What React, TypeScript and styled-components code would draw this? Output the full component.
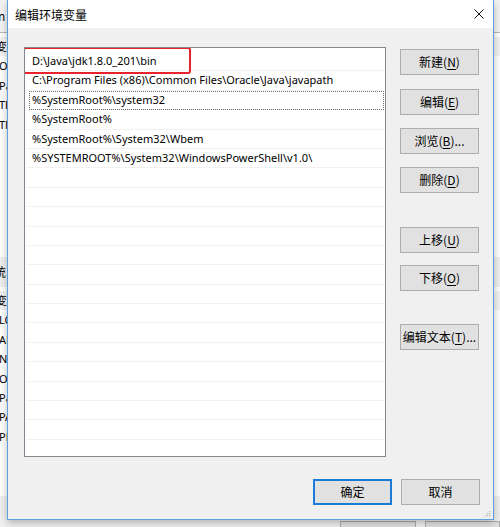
import React from "react";
import styled, { createGlobalStyle } from "styled-components";

const GlobalStyle = createGlobalStyle`
  html, body { margin: 0; padding: 0; }
  body {
    width: 500px;
    height: 527px;
    overflow: hidden;
    background: #ececec;
    font-family: "Noto Sans", "Noto Sans CJK SC", sans-serif;
    font-size: 12px;
    color: #000;
  }
`;

const FONT = `"Noto Sans", "Noto Sans CJK SC", sans-serif`;

const Desktop = styled.div`
  position: relative;
  width: 500px;
  height: 527px;
  overflow: hidden;
`;

/* ---------- background window (mostly hidden behind dialog) ---------- */
const BackWindow = styled.div`
  width: 500px;
  height: 527px;
  display: flex;
  flex-direction: column;
  background: #f0f0f0;
`;

const BackTitle = styled.div`
  height: 32px;
  border-bottom: 1px solid #b9b9b9;
  background: #f4f4f4;
  display: flex;
  align-items: center;
  font-family: ${FONT};
  font-size: 12px;
  margin-left: -6px;
`;

const BackList = styled.div<{ $h: number }>`
  height: ${(p) => p.$h}px;
  background: #fff;
  display: flex;
  flex-direction: column;
  padding-top: 4px;
`;

const BackRow = styled.div<{ $header?: boolean }>`
  height: 19.4px;
  line-height: 19px;
  font-family: ${FONT};
  font-size: 11px;
  white-space: nowrap;
  background: ${(p) => (p.$header ? "#f3f3f3" : "transparent")};
  margin-left: ${(p) => (p.$header ? "-4px" : "-1px")};
`;

const BackSection = styled.div`
  height: 30px;
  display: flex;
  align-items: center;
  font-family: ${FONT};
  font-size: 12px;
  margin-left: -6px;
`;

const BackButtons = styled.div`
  margin-top: auto;
  height: 6px;
  display: flex;
  padding-left: 340px;
  gap: 9px;
`;

const BackButton = styled.div<{ $w: number }>`
  width: ${(p) => p.$w}px;
  height: 26px;
  border: 1px solid #adadad;
  background: #e1e1e1;
  box-sizing: border-box;
`;

/* ---------- dialog ---------- */
const Dialog = styled.div`
  position: absolute;
  left: 7px;
  top: 0;
  width: 487px;
  height: 520px;
  box-sizing: border-box;
  border: 1px solid #5b9fe0;
  border-top: none;
  background: #f0f0f0;
  display: flex;
  flex-direction: column;
  box-shadow: 0 3px 8px rgba(0, 0, 0, 0.25);
`;

const TitleBar = styled.div`
  height: 28px;
  flex: none;
  background: #fff;
  display: flex;
  align-items: center;
  justify-content: space-between;
  padding: 0 9px 0 7px;
`;

const TitleText = styled.span`
  font-family: "Noto Sans CJK SC", sans-serif;
  font-size: 12px;
  color: #000;
`;

const CloseBox = styled.div`
  width: 10px;
  height: 10px;
  display: flex;
`;

const Body = styled.div`
  flex: 1;
  display: flex;
  flex-direction: column;
  padding: 19px 13px 15px 16px;
`;

const Main = styled.div`
  display: flex;
  align-items: flex-start;
`;

const ListBox = styled.div`
  position: relative;
  width: 362px;
  height: 410px;
  box-sizing: border-box;
  border: 1px solid #828790;
  background: #fff;
  overflow: hidden;
  padding: 4px 0 0 0;
  display: flex;
  flex-direction: column;
`;

const Row = styled.div<{ $focus?: boolean }>`
  height: 19.4px;
  flex: none;
  box-sizing: border-box;
  border-bottom: 1px solid #f2f2f2;
  margin-left: 1px;
  padding-left: 6px;
  line-height: 18px;
  font-family: ${FONT};
  font-size: 11px;
  color: #000;
  white-space: nowrap;
  outline: ${(p) => (p.$focus ? "1px dotted #6e6e6e" : "none")};
  outline-offset: -1px;
  ${(p) => (p.$focus ? "margin-left: 4px; padding-left: 3px; margin-right: 1px;" : "")}
`;

const Highlight = styled.div`
  position: absolute;
  left: -2px;
  top: -1px;
  width: 168px;
  height: 27px;
  box-sizing: border-box;
  border: 2px solid #e8232b;
  border-radius: 3px;
  pointer-events: none;
`;

const ButtonColumn = styled.div`
  margin-left: 14px;
  padding-top: 2px;
  display: flex;
  flex-direction: column;
`;

const Button = styled.button<{ $mt?: number; $default?: boolean }>`
  width: 79px;
  height: 26px;
  margin-top: ${(p) => p.$mt ?? 0}px;
  box-sizing: border-box;
  border: ${(p) => (p.$default ? "2px solid #1a7cd6" : "1px solid #adadad")};
  background: #e1e1e1;
  font-family: "Noto Sans CJK SC", sans-serif;
  font-size: 12px;
  color: #000;
  padding: 0;
  display: flex;
  align-items: center;
  justify-content: center;
  line-height: 1;
  u { text-decoration: underline; text-underline-offset: 2px; }
`;

const Footer = styled.div`
  margin-top: 22px;
  display: flex;
  justify-content: flex-end;
  gap: 9px;
`;

const Grip = styled.svg`
  position: absolute;
  right: 2px;
  bottom: 2px;
`;

const rows = [
  "D:\\Java\\jdk1.8.0_201\\bin",
  "C:\\Program Files (x86)\\Common Files\\Oracle\\Java\\javapath",
  "%SystemRoot%\\system32",
  "%SystemRoot%",
  "%SystemRoot%\\System32\\Wbem",
  "%SYSTEMROOT%\\System32\\WindowsPowerShell\\v1.0\\",
];

const totalRows = 22;

const backTop = ["变量", "OneDrive", "Path", "TEMP", "TMP"];
const backBottom = ["变量", "LOGONSERVER", "APPDATA", "NUMBER_OF", "OS", "Path", "PATHEXT", "PROCESSOR"];

export default function App() {
  const list = Array.from({ length: totalRows }, (_, i) => rows[i] ?? "");
  return (
    <Desktop>
      <GlobalStyle />
      <BackWindow>
        <BackTitle>m</BackTitle>
        <BackList $h={220}>
          {backTop.map((t, i) => (
            <BackRow key={i} $header={i === 0}>{t}</BackRow>
          ))}
        </BackList>
        <BackSection>统</BackSection>
        <BackList $h={205}>
          {backBottom.map((t, i) => (
            <BackRow key={i} $header={i === 0}>{t}</BackRow>
          ))}
        </BackList>
        <BackButtons>
          <BackButton $w={79} />
          <BackButton $w={79} />
        </BackButtons>
      </BackWindow>

      <Dialog>
        <TitleBar>
          <TitleText>编辑环境变量</TitleText>
          <CloseBox>
            <svg width="10" height="10" viewBox="0 0 10 10">
              <path d="M0.5 0.5 L9.5 9.5 M9.5 0.5 L0.5 9.5" stroke="#111" strokeWidth="1" fill="none" />
            </svg>
          </CloseBox>
        </TitleBar>
        <Body>
          <Main>
            <ListBox>
              {list.map((t, i) => (
                <Row key={i} $focus={i === 2}>
                  {t}
                </Row>
              ))}
              <Highlight />
            </ListBox>
            <ButtonColumn>
              <Button>新建(<u>N</u>)</Button>
              <Button $mt={14}>编辑(<u>E</u>)</Button>
              <Button $mt={13}>浏览(<u>B</u>)...</Button>
              <Button $mt={13}>删除(<u>D</u>)</Button>
              <Button $mt={34}>上移(<u>U</u>)</Button>
              <Button $mt={12}>下移(<u>O</u>)</Button>
              <Button $mt={33}>编辑文本(<u>T</u>)...</Button>
            </ButtonColumn>
          </Main>
          <Footer>
            <Button $default>确定</Button>
            <Button>取消</Button>
          </Footer>
        </Body>
        <Grip width="7" height="7" viewBox="0 0 7 7">
          <rect x="5" y="1" width="1.2" height="1.2" fill="#b5b5b5" />
          <rect x="3" y="3" width="1.2" height="1.2" fill="#b5b5b5" />
          <rect x="5" y="3" width="1.2" height="1.2" fill="#b5b5b5" />
          <rect x="1" y="5" width="1.2" height="1.2" fill="#b5b5b5" />
          <rect x="3" y="5" width="1.2" height="1.2" fill="#b5b5b5" />
          <rect x="5" y="5" width="1.2" height="1.2" fill="#b5b5b5" />
        </Grip>
      </Dialog>
    </Desktop>
  );
}
